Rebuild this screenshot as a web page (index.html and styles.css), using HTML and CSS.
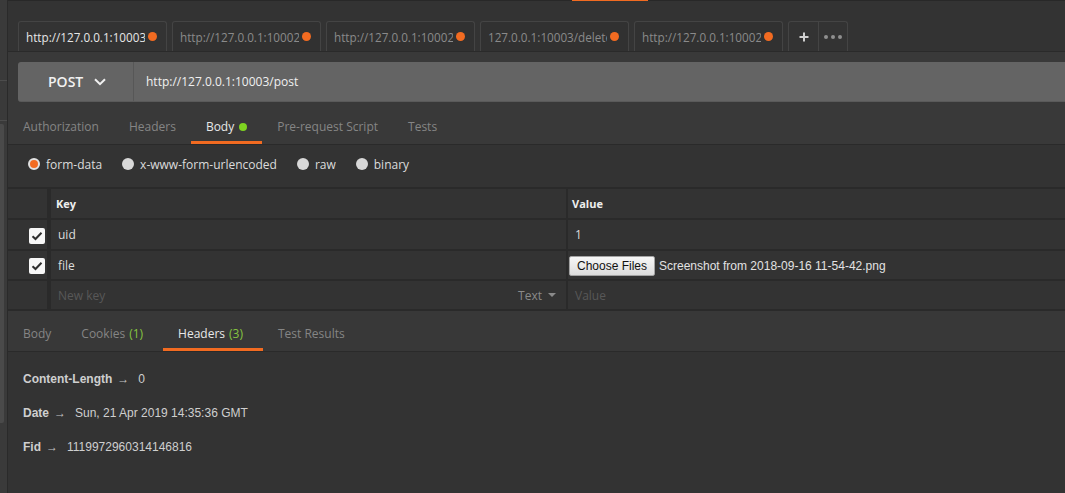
FILE: index.html
```html
<!DOCTYPE html>
<html lang="en">
<head>
<meta charset="utf-8">
<title>Postman</title>
<link rel="stylesheet" href="styles.css">
</head>
<body>
<div class="app">
  <aside class="rail">
    <div class="rail-top"></div>
    <div class="rail-mid"></div>
    <div class="rail-scroll"></div>
  </aside>
  <main class="main">
    <div class="topline"><span class="topline-mark"></span></div>
    <div class="tabbar">
      <div class="tab active"><span class="tab-label">http://127.0.0.1:10003/post</span><span class="dot"></span></div>
      <div class="tab"><span class="tab-label">http://127.0.0.1:10002/get</span><span class="dot"></span></div>
      <div class="tab"><span class="tab-label">http://127.0.0.1:10002/get</span><span class="dot"></span></div>
      <div class="tab"><span class="tab-label">127.0.0.1:10003/delete</span><span class="dot"></span></div>
      <div class="tab"><span class="tab-label">http://127.0.0.1:10002/get</span><span class="dot"></span></div>
      <div class="tab-actions">
        <span class="ta-btn ta-plus"><svg width="10" height="10" viewBox="0 0 10 10"><path d="M5 0.5V9.5M0.5 5H9.5" stroke="#cfcfcf" stroke-width="2"/></svg></span>
        <span class="ta-btn ta-more"><svg width="18" height="4" viewBox="0 0 18 4"><circle cx="2" cy="2" r="2" fill="#8f8f8f"/><circle cx="9" cy="2" r="2" fill="#8f8f8f"/><circle cx="16" cy="2" r="2" fill="#8f8f8f"/></svg></span>
      </div>
    </div>
    <section class="builder">
      <div class="urlbar">
        <div class="method">POST<svg class="chev" width="12" height="8" viewBox="0 0 12 8"><path d="M1 1.2L6 6.2L11 1.2" fill="none" stroke="#f0f0f0" stroke-width="2"/></svg></div>
        <div class="url">http://127.0.0.1:10003/post</div>
      </div>
      <nav class="reqtabs">
        <span class="rt">Authorization</span>
        <span class="rt">Headers</span>
        <span class="rt on">Body<span class="gdot"></span></span>
        <span class="rt">Pre-request Script</span>
        <span class="rt">Tests</span>
      </nav>
    </section>
    <div class="modes">
      <span class="mode"><span class="radio sel"></span>form-data</span>
      <span class="mode"><span class="radio"></span>x-www-form-urlencoded</span>
      <span class="mode"><span class="radio"></span>raw</span>
      <span class="mode"><span class="radio"></span>binary</span>
    </div>
    <div class="kv">
      <div class="kv-row kv-head">
        <div class="c-chk"></div>
        <div class="c-key">Key</div>
        <div class="c-val">Value</div>
      </div>
      <div class="kv-row kv-first">
        <div class="c-chk"><span class="cb"><svg width="12" height="10" viewBox="0 0 12 10"><path d="M1.5 5.2L4.5 8L10.5 1.8" fill="none" stroke="#2e2e2e" stroke-width="2"/></svg></span></div>
        <div class="c-key">uid</div>
        <div class="c-val">1</div>
      </div>
      <div class="kv-row">
        <div class="c-chk"><span class="cb"><svg width="12" height="10" viewBox="0 0 12 10"><path d="M1.5 5.2L4.5 8L10.5 1.8" fill="none" stroke="#2e2e2e" stroke-width="2"/></svg></span></div>
        <div class="c-key">file</div>
        <div class="c-val c-file"><span class="filebtn">Choose Files</span><span class="filename">Screenshot from 2018-09-16 11-54-42.png</span></div>
      </div>
      <div class="kv-row">
        <div class="c-chk"></div>
        <div class="c-key ph"><span>New key</span><span class="ktype">Text<span class="caret"></span></span></div>
        <div class="c-val ph">Value</div>
      </div>
    </div>
    <nav class="restabs">
      <span class="rt">Body</span>
      <span class="rt">Cookies <span class="cnt">(1)</span></span>
      <span class="rt on">Headers <span class="cnt">(3)</span></span>
      <span class="rt">Test Results</span>
    </nav>
    <div class="resheaders">
      <div class="hrow"><span class="hk">Content-Length</span><span class="arr">→</span><span class="hv">0</span></div>
      <div class="hrow"><span class="hk">Date</span><span class="arr">→</span><span class="hv">Sun, 21 Apr 2019 14:35:36 GMT</span></div>
      <div class="hrow"><span class="hk">Fid</span><span class="arr">→</span><span class="hv">1119972960314146816</span></div>
    </div>
  </main>
</div>
</body>
</html>
```

FILE: styles.css
```css
* { box-sizing: border-box; }
html, body { margin: 0; padding: 0; }
body {
  width: 1065px;
  height: 493px;
  overflow: hidden;
  background: #333333;
  font-family: "Open Sans", "Liberation Sans", sans-serif;
  font-size: 12px;
  color: #dddddd;
}
.app { display: flex; height: 493px; }

/* left rail */
.rail {
  width: 8px;
  flex: none;
  background: #3a3a3a;
  border-right: 1px solid #2a2a2a;
  display: flex;
  flex-direction: column;
}
.rail-top { height: 81px; border-bottom: 1px solid #4c4c4c; }
.rail-mid { height: 40px; border-bottom: 1px solid #4c4c4c; }
.rail-scroll {
  margin-top: 3px;
  width: 4px;
  height: 299px;
  background: #4a4a4a;
  border-radius: 0 2px 2px 0;
}

.main { flex: 1; display: flex; flex-direction: column; min-width: 0; }

/* top line */
.topline { height: 1px; background: #282828; display: flex; }
.topline-mark { margin-left: 564px; width: 76px; background: #f26b21; }

/* tab bar */
.tabbar {
  height: 51px;
  padding-left: 10px;
  display: flex;
  align-items: flex-end;
  border-bottom: 1px solid #2a2a2a;
  background: #333333;
}
.tab {
  width: 149px;
  height: 30px;
  margin-right: 5px;
  display: flex;
  align-items: center;
  padding: 0 9px 0 7px;
  border: 1px solid #444444;
  border-bottom: none;
  border-radius: 3px 3px 0 0;
  background: #313131;
  color: #8a8a8a;
  font-size: 11.7px;
}
.tab.active { background: #333333; color: #e6e6e6; }
.tab-label {
  width: 120px;
  overflow: hidden;
  white-space: nowrap;
  margin-right: 3px;
}
.dot {
  width: 9px;
  height: 9px;
  border-radius: 50%;
  background: #f26b21;
  flex: none;
}
.tab-actions {
  display: flex;
  height: 30px;
  border: 1px solid #444444;
  border-bottom: none;
  border-radius: 3px 3px 0 0;
}
.ta-btn {
  display: flex;
  align-items: center;
  justify-content: center;
  height: 100%;
}
.ta-plus { width: 30px; border-right: 1px solid #444444; }
.ta-more { width: 28px; }

/* builder */
.builder { background: #393939; padding-top: 10px; }
.urlbar {
  margin-left: 10px;
  height: 40px;
  display: flex;
  background: #646464;
  border-radius: 3px 0 0 3px;
  border-bottom: 1px solid #5a5a5a;
}
.method {
  width: 116px;
  display: flex;
  align-items: center;
  gap: 11px;
  padding-left: 30px;
  font-size: 14px;
  font-weight: 600;
  color: #f2f2f2;
  border-right: 1px solid #575757;
}
.url {
  display: flex;
  align-items: center;
  padding-left: 12px;
  color: #f0f0f0;
  font-size: 12px;
}

/* request tabs */
.reqtabs {
  display: flex;
  height: 43px;
  border-bottom: 1px solid #2a2a2a;
  background: #393939;
}
.rt {
  height: 42px;
  padding: 17px 15px 0;
  line-height: 16px;
  color: #858585;
  border-bottom: 3px solid transparent;
  white-space: nowrap;
  display: flex;
  align-items: flex-start;
}
.rt.on { color: #e8e8e8; border-bottom-color: #f26b21; }
.gdot {
  width: 8px;
  height: 8px;
  border-radius: 50%;
  background: #7ed321;
  margin: 4px 0 0 5px;
}

/* modes */
.modes {
  height: 42px;
  padding: 0 0 4px 20px;
  display: flex;
  align-items: center;
  gap: 20px;
  color: #dcdcdc;
}
.mode { display: flex; align-items: center; gap: 6px; }
.radio {
  width: 12px;
  height: 12px;
  border-radius: 50%;
  background: #d8d8d8;
}
.radio.sel { background: #f26b21; border: 2px solid #e2e2e2; }

/* key-value table */
.kv { border-top: 2px solid #2a2a2a; }
.kv-row {
  display: flex;
  height: 30px;
  border-bottom: 2px solid #2a2a2a;
}
.kv-head { height: 31px; font-size: 11px; font-weight: 700; color: #eeeeee; }
.kv-first { height: 31px; }
.c-chk {
  width: 43px;
  border-right: 4px solid #2a2a2a;
  display: flex;
  align-items: center;
  justify-content: flex-end;
  padding-right: 2px;
}
.c-key {
  width: 517px;
  border-right: 2px solid #2a2a2a;
  display: flex;
  align-items: center;
  padding-left: 7px;
}
.c-val {
  flex: 1;
  display: flex;
  align-items: center;
  padding-left: 7px;
}
.kv-head .c-key { padding-left: 5px; }
.kv-head .c-val { padding-left: 4px; }
.cb {
  width: 16px;
  height: 16px;
  border-radius: 2px;
  background: #f7f7f7;
  display: flex;
  align-items: center;
  justify-content: center;
  margin-top: 2px;
}
.c-file { padding-left: 1px; }
.filebtn {
  width: 86px;
  height: 20px;
  display: flex;
  align-items: center;
  justify-content: center;
  font-family: "Liberation Sans", Arial, sans-serif;
  font-size: 12px;
  color: #111111;
  background: linear-gradient(#f7f7f7, #dddddd);
  border: 1px solid #a3a3a3;
  border-radius: 2px;
  margin-top: 2px;
}
.filename {
  margin-left: 4px;
  margin-top: 2px;
  font-family: "Liberation Sans", Arial, sans-serif;
  font-size: 12px;
  color: #e2e2e2;
}
.ph { color: #585858; }
.c-key.ph { justify-content: space-between; padding-right: 10px; }
.ktype { color: #8a8a8a; display: flex; align-items: center; }
.caret {
  width: 0;
  height: 0;
  border-left: 4px solid transparent;
  border-right: 4px solid transparent;
  border-top: 4px solid #8a8a8a;
  margin-left: 6px;
}

/* response tabs */
.restabs {
  display: flex;
  height: 41px;
  background: #383838;
  border-bottom: 1px solid #2a2a2a;
}
.restabs .rt { height: 40px; padding-top: 15px; }
.cnt { color: #86c440; margin-left: 4px; margin-right: 5px; }

/* response headers */
.resheaders {
  padding: 10px 0 0 15px;
  font-family: "Liberation Sans", Arial, sans-serif;
  font-size: 12px;
  color: #cfcfcf;
}
.hrow { height: 34px; display: flex; align-items: center; }
.hk { font-weight: 700; }
.arr { margin: 0 9px 0 5px; color: #c4c4c4; }
```
